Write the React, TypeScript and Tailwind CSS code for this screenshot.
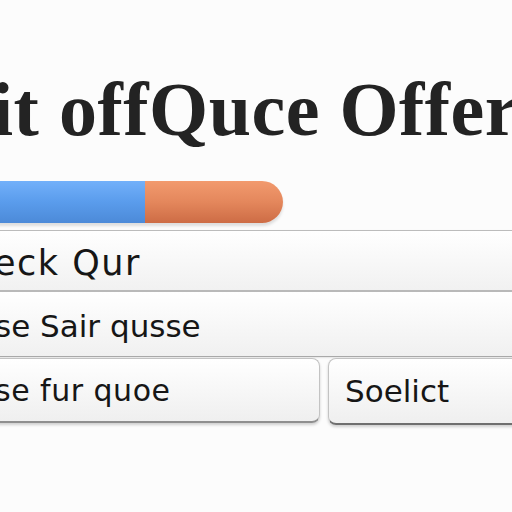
import React from 'react';

// --- QUOTE OFFER PANEL ---

function ProgressBar() {
  return (
    <div className="relative -ml-6 w-[307px] h-[42px] flex rounded-r-full overflow-hidden shadow-[0_3px_3px_rgba(0,0,0,0.12)]">
      <div className="w-[169px] h-full bg-gradient-to-b from-[#72b0fa] via-[#5a9cec] to-[#4c8ad8]" />
      <div className="flex-1 h-full bg-gradient-to-b from-[#f29a6e] via-[#e4875c] to-[#cd6c45]" />
    </div>
  );
}

function App() {
  const sans = { fontFamily: '"DejaVu Sans", Verdana, sans-serif' };

  return (
    <div className="w-[512px] h-[512px] overflow-hidden bg-[#fcfcfc] text-[#161616]">
      <h1
        className="mt-[71px] -ml-[8px] whitespace-nowrap text-[76px] leading-none font-bold tracking-[0.5px] text-[#232323]"
        style={{ fontFamily: '"Liberation Serif", "Times New Roman", serif' }}
      >
        it offQuce Offer
      </h1>

      <div className="mt-[34px]">
        <ProgressBar />
      </div>

      <div className="mt-[7px] -ml-4 -mr-4" style={sans}>
        <div className="rounded-md border border-[#bcbcbc] border-b-[#a9a9a9] shadow-[0_1px_2px_rgba(0,0,0,0.1)] overflow-hidden">
          <div className="h-[61px] flex items-center pl-[9px] border-b-2 border-[#b9b9b9] bg-gradient-to-b from-white to-[#f1f1f1]">
            <span className="text-[35px] tracking-[1.5px] pt-[6px]">eck Qur</span>
          </div>
          <div className="h-[64px] flex items-center pl-[10px] bg-gradient-to-b from-white to-[#f0f0f0]">
            <span className="text-[31px] pt-[4px]">se Sair qusse</span>
          </div>
        </div>

        <div className="flex gap-[8px] mt-[1px]">
          <div className="w-[336px] h-[65px] flex items-center pl-[10px] rounded-lg border border-[#c3c3c3] border-b-2 border-b-[#8f8f8f] bg-gradient-to-b from-white to-[#efefef] shadow-[0_2px_3px_rgba(0,0,0,0.18)]">
            <span className="text-[30px] tracking-[0.5px]">se fur quoe</span>
          </div>
          <div className="flex-1 h-[67px] flex items-center pl-[16px] rounded-lg border border-[#c3c3c3] border-b-2 border-b-[#6f6f6f] bg-gradient-to-b from-white to-[#efefef] shadow-[0_2px_3px_rgba(0,0,0,0.18)]">
            <span className="text-[31px]">Soelict</span>
          </div>
        </div>
      </div>
    </div>
  );
}

export default App;
